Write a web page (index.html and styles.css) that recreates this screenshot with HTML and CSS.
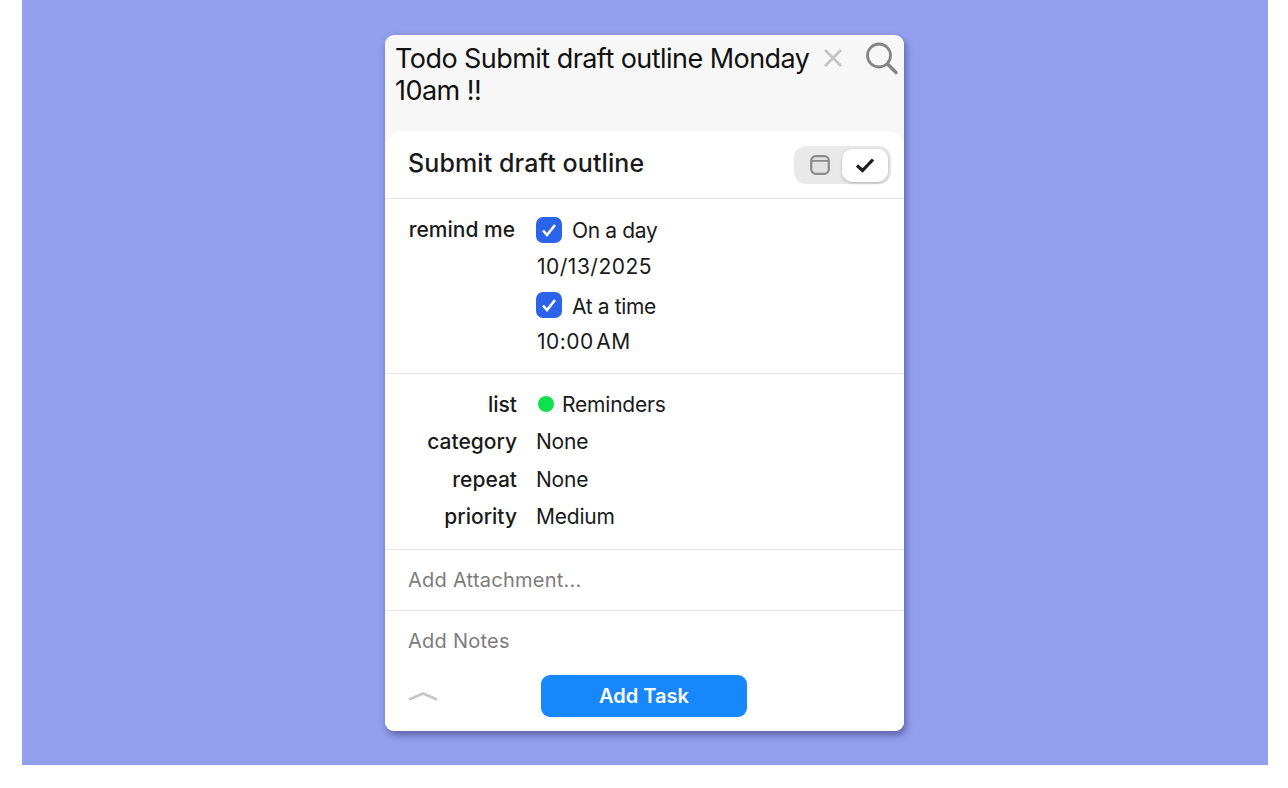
FILE: index.html
```html
<!DOCTYPE html>
<html lang="en">
<head>
    <meta charset="UTF-8">
    <meta name="viewport" content="width=device-width, initial-scale=1.0">
    <title>Add Task</title>
    <link rel="stylesheet" href="styles.css">
</head>
<body>
    <div class="stage">
        <div class="panel">
            <div class="query">
                <div class="query-text">Todo Submit draft outline Monday 10am !!</div>
                <svg class="query-clear" width="20" height="20" viewBox="0 0 20 20">
                    <path d="M2 2L18 18M18 2L2 18" fill="none" stroke="#c4c4c4" stroke-width="2.8"/>
                </svg>
                <svg class="query-search" width="33" height="33" viewBox="0 0 33 33">
                    <circle cx="14" cy="13.5" r="11.5" fill="none" stroke="#858585" stroke-width="2.8"/>
                    <path d="M22.5 22L31 30.5" fill="none" stroke="#858585" stroke-width="3.4" stroke-linecap="round"/>
                </svg>
            </div>
            <div class="sheet">
                <div class="title-row">
                    <div class="task-title">Submit draft outline</div>
                    <div class="toggle">
                        <div class="toggle-opt">
                            <svg width="20" height="20" viewBox="0 0 20 20">
                                <rect x="1.2" y="1.2" width="17.6" height="17.6" rx="4.5" fill="#e2e2e2" stroke="#8b8b8b" stroke-width="2.2"/>
                                <path d="M2 5.8H18" stroke="#8b8b8b" stroke-width="1.8"/>
                            </svg>
                        </div>
                        <div class="toggle-opt toggle-on">
                            <svg width="20" height="16" viewBox="0 0 20 16">
                                <path d="M2 8.5L7.5 13.5L18 2.5" fill="none" stroke="#1c1c1c" stroke-width="3.2"/>
                            </svg>
                        </div>
                    </div>
                </div>
                <div class="section remind">
                    <div class="label remind-label">remind me</div>
                    <div class="remind-fields">
                        <div class="check-row">
                            <span class="checkbox"><svg width="16" height="14" viewBox="0 0 16 14"><path d="M2 7.5L6 12L14 2" fill="none" stroke="#fff" stroke-width="2.6"/></svg></span>
                            <span class="check-text">On a day</span>
                        </div>
                        <div class="value-row">10/13/2025</div>
                        <div class="check-row check-second">
                            <span class="checkbox"><svg width="16" height="14" viewBox="0 0 16 14"><path d="M2 7.5L6 12L14 2" fill="none" stroke="#fff" stroke-width="2.6"/></svg></span>
                            <span>At a time</span>
                        </div>
                        <div class="value-row">10:00&#8202;AM</div>
                    </div>
                </div>
                <div class="section props">
                    <div class="label">list</div>
                    <div class="prop-value"><span class="dot"></span>Reminders</div>
                    <div class="label">category</div>
                    <div class="prop-value">None</div>
                    <div class="label">repeat</div>
                    <div class="prop-value">None</div>
                    <div class="label">priority</div>
                    <div class="prop-value">Medium</div>
                </div>
                <div class="section attach">Add Attachment...</div>
                <div class="notes">
                    <div class="notes-text">Add Notes</div>
                    <div class="footer">
                        <svg class="chevron" width="30" height="12" viewBox="0 0 30 12">
                            <path d="M1 9.5L15 3.5L29 9.5" fill="none" stroke="#c6c6c6" stroke-width="2.6"/>
                        </svg>
                        <button class="add-btn" type="button">Add Task</button>
                    </div>
                </div>
            </div>
        </div>
    </div>
</body>
</html>
```

FILE: styles.css
```css
html, body {
    margin: 0;
    padding: 0;
    background-color: #ffffff;
}
body {
    font-family: Inter, "Liberation Sans", sans-serif;
    color: #1a1a1a;
}
.stage {
    box-sizing: border-box;
    width: 1246px;
    height: 765px;
    margin-left: 22px;
    padding: 35px 0 0 363px;
    background-color: #929fec;
}
.panel {
    width: 519px;
    height: 696px;
    display: flex;
    flex-direction: column;
    background-color: #f7f7f7;
    border-radius: 9px;
    overflow: hidden;
    box-shadow: 2px 4px 7px rgba(50,50,110,0.55);
}
.query {
    height: 96px;
    flex: none;
    display: flex;
    align-items: flex-start;
    box-sizing: border-box;
    padding: 7px 0 0 10px;
}
.query-text {
    width: 425px;
    font-size: 27px;
    line-height: 32px;
    letter-spacing: -0.55px;
    margin-top: 1px;
    color: #111;
}
.query-clear {
    margin: 6px 0 0 3px;
}
.query-search {
    margin: 0 0 0 22px;
}
.sheet {
    flex: 1;
    display: flex;
    flex-direction: column;
    background-color: #fff;
    border-radius: 18px 18px 0 0;
}
.title-row {
    height: 67px;
    flex: none;
    display: flex;
    align-items: center;
    justify-content: space-between;
    padding: 0 13px 0 23px;
    border-bottom: 1px solid #e4e4e4;
}
.task-title {
    font-size: 25px;
    font-weight: 500;
    letter-spacing: 0.1px;
    margin-bottom: 4px;
}
.toggle {
    width: 97px;
    height: 38px;
    margin-top: 1px;
    display: flex;
    align-items: center;
    box-sizing: border-box;
    padding: 3px;
    background-color: #e9e9e9;
    border-radius: 12px;
}
.toggle-opt {
    flex: 1;
    height: 33px;
    display: flex;
    align-items: center;
    justify-content: center;
}
.toggle-on {
    flex: none;
    width: 46px;
    background-color: #fff;
    border-radius: 10px;
    box-shadow: 0 1px 3px rgba(0,0,0,0.25);
}
.section {
    flex: none;
    border-bottom: 1px solid #e4e4e4;
    box-sizing: border-box;
}
.label {
    font-size: 21px;
    font-weight: 500;
    letter-spacing: 0;
    text-align: right;
    color: #1a1a1a;
}
.remind {
    height: 175px;
    display: flex;
    padding-top: 18px;
}
.remind-label {
    width: 130px;
    line-height: 26px;
}
.remind-fields {
    margin-left: 21px;
    margin-top: -1px;
    font-size: 21px;
    letter-spacing: -0.35px;
}
.check-row {
    display: flex;
    align-items: center;
    gap: 10px;
    height: 28px;
    margin-top: 1px;
}
.check-second {
    margin-top: 12px;
}
.check-text {
    margin-bottom: 2px;
}
.checkbox {
    width: 26px;
    height: 26px;
    margin-bottom: 2px;
    display: flex;
    align-items: center;
    justify-content: center;
    background-color: #2b63ea;
    border-radius: 7px;
}
.value-row {
    line-height: 26px;
    margin-top: 9px;
    margin-left: 1px;
    letter-spacing: 0.5px;
}
.props {
    height: 176px;
    padding-top: 11.5px;
    display: grid;
    grid-template-columns: 132px 1fr;
    grid-auto-rows: 37.5px;
    column-gap: 19px;
    align-items: center;
}
.prop-value {
    font-size: 21px;
    letter-spacing: -0.2px;
    display: flex;
    align-items: center;
}
.dot {
    width: 16px;
    height: 16px;
    margin: 0 8px 0 2px;
    border-radius: 50%;
    background-color: #0fe04f;
}
.attach {
    height: 61px;
    padding-left: 23px;
    display: flex;
    align-items: center;
    font-size: 20px;
    letter-spacing: 0.25px;
    color: #7c7c7c;
}
.notes {
    flex: 1;
    padding: 18px 23px 0;
}
.notes-text {
    font-size: 20px;
    line-height: 24px;
    letter-spacing: 0.25px;
    color: #7c7c7c;
}
.footer {
    display: flex;
    align-items: flex-start;
    margin-top: 22px;
}
.chevron {
    margin-top: 15px;
    flex: none;
}
.add-btn {
    width: 206px;
    height: 42px;
    margin-left: 103px;
    border: none;
    border-radius: 9px;
    background-color: #1787fb;
    color: #fff;
    font-family: inherit;
    font-size: 20px;
    font-weight: 600;
    letter-spacing: 0px;
}
```
